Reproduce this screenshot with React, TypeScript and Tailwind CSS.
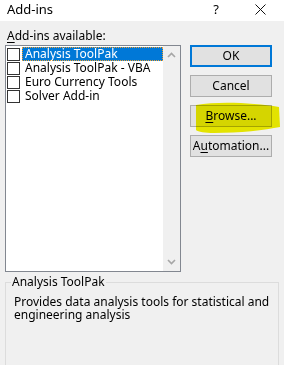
import React from "react";

const font = { fontFamily: '"Noto Sans", "Open Sans", sans-serif' };

function Check() {
  return <div className="w-[13px] h-[13px] border border-[#333333] bg-white shrink-0" />;
}

export default function App() {
  const items = ["Analysis ToolPak", "Analysis ToolPak - VBA", "Euro Currency Tools", "Solver Add-in"];
  return (
    <div className="relative w-[284px] h-[365px] overflow-hidden bg-[#f0f0f0] text-[12px] text-black" style={font}>
      {/* Title bar */}
      <div className="h-[21px] bg-white flex items-center justify-between pl-[7px] pr-[18px]">
        <span className="text-[13px] leading-[14px] -mt-[3px]">Add-ins</span>
        <div className="flex items-center gap-[36px] -mt-[3px]">
          <span className="text-[13px] leading-[14px]">?</span>
          <svg width="11" height="11" viewBox="0 0 11 11">
            <path d="M0.5 0.5 L10.5 10.5 M10.5 0.5 L0.5 10.5" stroke="#111" strokeWidth="1" />
          </svg>
        </div>
      </div>

      <div className="flex px-[5px]">
        {/* Left column */}
        <div className="w-[176px] flex flex-col">
          <div className="mt-[8px] h-[14px] leading-[14px] pl-[2px]">
            <span className="underline underline-offset-2">A</span>dd-ins available:
          </div>
          <div className="mt-[2px] h-[227px] border border-[#828790] bg-white flex">
            <div className="flex-1 flex flex-col pt-[1px]">
              {items.map((it, i) => (
                <div key={it} className="h-[14px] flex items-center pl-[1px]">
                  <Check />
                  {i === 0 ? (
                    <div className="ml-[2px] h-[14px] flex-1 bg-[#0078d7] text-white leading-[14px] pl-[3px] outline-1 outline-dotted outline-[#f0a030] -outline-offset-1">
                      {it}
                    </div>
                  ) : (
                    <div className="ml-[2px] h-[14px] leading-[14px] pl-[3px]">{it}</div>
                  )}
                </div>
              ))}
            </div>
            <div className="w-[17px] bg-[#f0f0f0] flex flex-col justify-between items-center py-[6px]">
              <svg width="9" height="6" viewBox="0 0 9 6">
                <path d="M1 5 L4.5 1.5 L8 5" stroke="#a6a6a6" strokeWidth="1.6" fill="none" />
              </svg>
              <svg width="9" height="6" viewBox="0 0 9 6">
                <path d="M1 1 L4.5 4.5 L8 1" stroke="#a6a6a6" strokeWidth="1.6" fill="none" />
              </svg>
            </div>
          </div>
        </div>

        {/* Right column */}
        <div className="ml-[9px] mt-[24px] w-[82px] flex flex-col gap-[8px]">
          <div className="h-[22px] border-2 border-[#0078d7] bg-[#e1e1e1] flex items-center justify-center">OK</div>
          <div className="h-[22px] border border-[#adadad] bg-[#e1e1e1] flex items-center justify-center">Cancel</div>
          <div className="h-[22px] border border-[#adadad] bg-[#e1e1e1] flex items-center justify-center">
            <span><span className="underline underline-offset-2">B</span>rowse...</span>
          </div>
          <div className="h-[22px] border border-[#adadad] bg-[#e1e1e1] flex items-center justify-center">
            <span>A<span className="underline underline-offset-2">u</span>tomation...</span>
          </div>
        </div>
      </div>

      {/* Group box */}
      <div className="mx-[5px] mt-[10px] h-[100px] border border-[#dcdcdc] relative pt-[12px] px-[8px]">
        <div className="absolute -top-[8px] left-[5px] bg-[#f0f0f0] px-[1px] leading-[14px]">Analysis ToolPak</div>
        <div className="leading-[13px]">Provides data analysis tools for statistical and engineering analysis</div>
      </div>

      {/* Highlighter mark */}
      <svg className="absolute left-0 top-0 pointer-events-none mix-blend-multiply" width="284" height="365">
        <path
          d="M196 105 C220 101 255 103 279 107 L280 127 C265 130 240 133 214 133 C205 133 198 132 196 130 Z"
          fill="#f2f200"
        />
      </svg>
    </div>
  );
}
